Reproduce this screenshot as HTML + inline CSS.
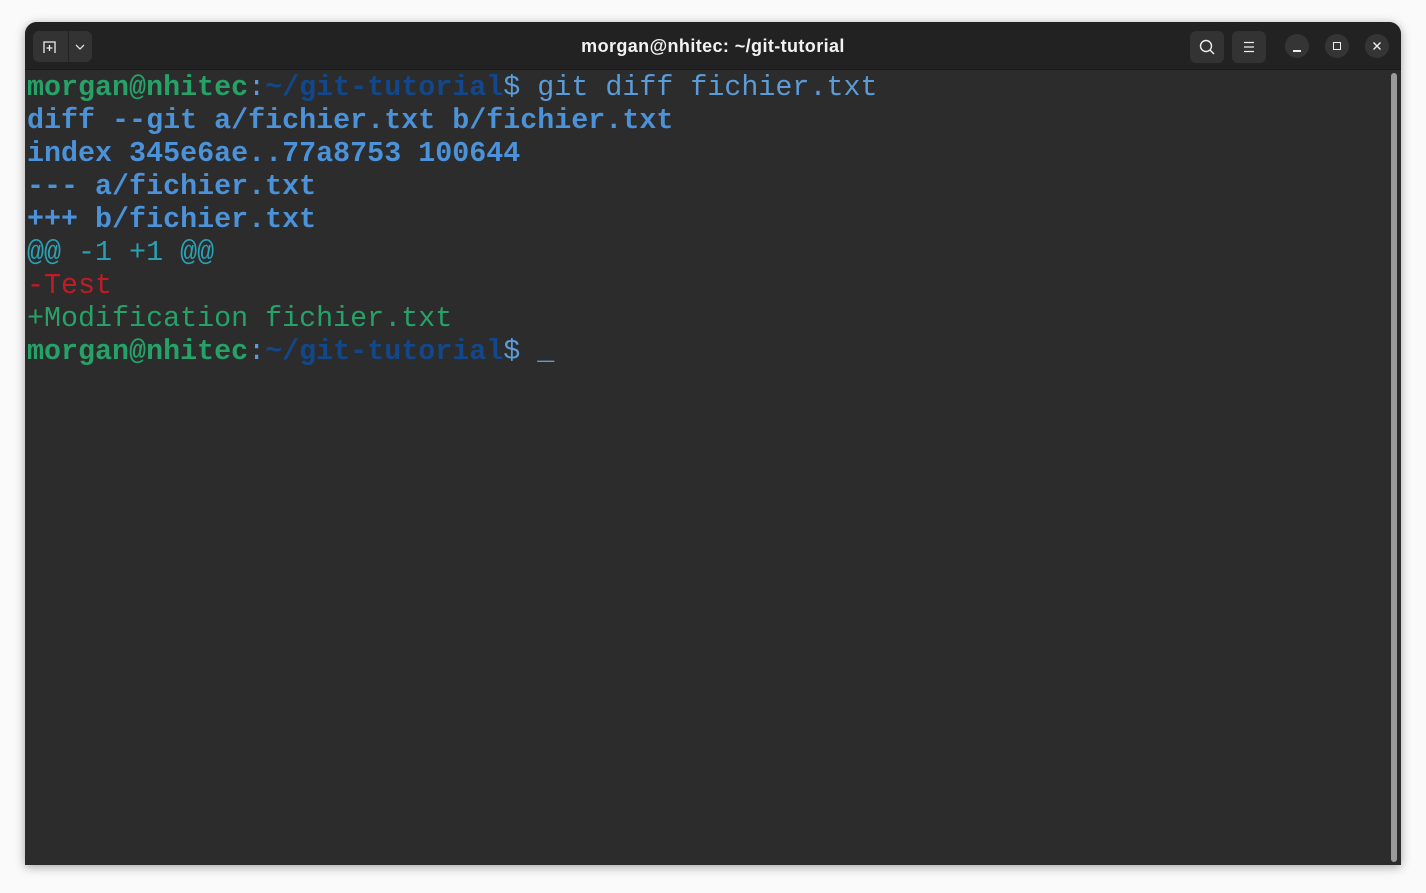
<!DOCTYPE html>
<html><head><meta charset="utf-8"><style>
html,body{margin:0;padding:0;width:1426px;height:893px;background:#fafafa;overflow:hidden;}
.win{position:absolute;left:25px;top:22px;width:1376px;height:843px;background:#2c2c2c;border-radius:12px 12px 0 0;box-shadow:0 2px 10px rgba(0,0,0,.35);overflow:hidden;}
.tb{position:absolute;left:0;top:0;width:1376px;height:47px;background:#222222;border-bottom:1px solid #191919;}
.title{position:absolute;left:0;right:0;top:14px;text-align:center;color:#f2f2f2;font:bold 18px "Liberation Sans",sans-serif;letter-spacing:0.4px;}
.btn{position:absolute;background:#333;border-radius:6px;}
.circ{position:absolute;width:24px;height:24px;border-radius:50%;background:#353535;top:12px;}
.term{position:absolute;left:2px;top:49px;font-family:"Liberation Mono",monospace;font-size:28.35px;line-height:33px;color:#5a9bd8;white-space:pre;}
.g{color:#26a269;font-weight:bold}.d{color:#12488b;font-weight:bold}.b{color:#4c92d9;font-weight:bold}
.c{color:#2aa1b3}.r{color:#c01c28}.gn{color:#26a269}
.sb{position:absolute;left:1366px;top:51px;width:6px;height:789px;background:#9a9a9a;border-radius:3px;}
</style></head><body>
<div class="win">
 <div class="tb">
  <div class="btn" style="left:8px;top:9px;width:59px;height:31px;"></div>
  <div style="position:absolute;left:43px;top:9px;width:1px;height:31px;background:#222"></div>
  <svg style="position:absolute;left:17px;top:17px" width="16" height="16" viewBox="0 0 16 16" fill="none" stroke="#eee" stroke-width="1.3"><path d="M2 14V3h11v11"/><path d="M7.5 6v6M4.5 9h6"/></svg>
  <svg style="position:absolute;left:49px;top:19px" width="12" height="12" viewBox="0 0 12 12" fill="none" stroke="#ddd" stroke-width="1.3"><path d="M2 4l4 4 4-4"/></svg>
  <div class="title">morgan@nhitec: ~/git-tutorial</div>
  <div class="btn" style="left:1165px;top:9px;width:34px;height:32px;"></div>
  <svg style="position:absolute;left:1173px;top:16px" width="18" height="18" viewBox="0 0 18 18" fill="none" stroke="#eee" stroke-width="1.4"><circle cx="8" cy="8" r="5.5"/><path d="M12 12l4 4"/></svg>
  <div class="btn" style="left:1207px;top:9px;width:34px;height:32px;"></div>
  <svg style="position:absolute;left:1216px;top:17px" width="16" height="16" viewBox="0 0 16 16" stroke="#eee" stroke-width="1.3"><path d="M3 3.5h10M3 8h10M3 12.5h10"/></svg>
  <div class="circ" style="left:1260px"></div>
  <div style="position:absolute;left:1268px;top:28px;width:8px;height:1.5px;background:#eee"></div>
  <div class="circ" style="left:1300px"></div>
  <div style="position:absolute;left:1308px;top:20px;width:6px;height:6px;border:1.4px solid #eee"></div>
  <div class="circ" style="left:1340px"></div>
  <svg style="position:absolute;left:1346px;top:18px" width="12" height="12" viewBox="0 0 12 12" stroke="#eee" stroke-width="1.4"><path d="M2.5 2.5l7 7M9.5 2.5l-7 7"/></svg>
 </div>
 <div class="sb"></div>
 <div class="term"><span class="g">morgan@nhitec</span>:<span class="d">~/git-tutorial</span>$ git diff fichier.txt
<span class="b">diff --git a/fichier.txt b/fichier.txt</span>
<span class="b">index 345e6ae..77a8753 100644</span>
<span class="b">--- a/fichier.txt</span>
<span class="b">+++ b/fichier.txt</span>
<span class="c">@@ -1 +1 @@</span>
<span class="r">-Test</span>
<span class="gn">+Modification fichier.txt</span>
<span class="g">morgan@nhitec</span>:<span class="d">~/git-tutorial</span>$ _</div>
</div>
</body></html>
